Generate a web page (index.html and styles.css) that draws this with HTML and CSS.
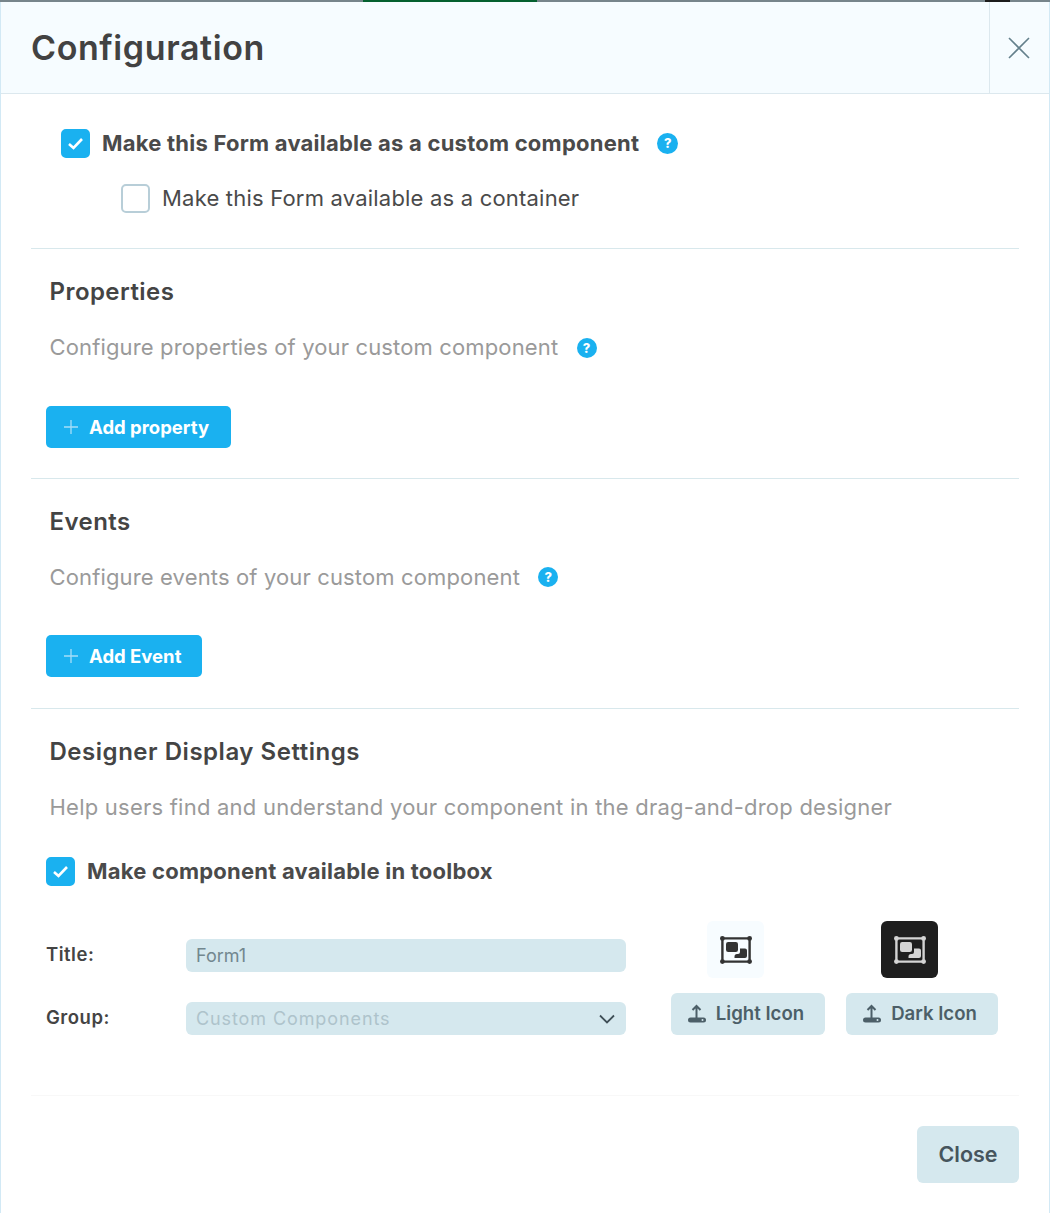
FILE: index.html
```html
<!DOCTYPE html>
<html lang="en">
<head>
    <meta charset="UTF-8">
    <title>Configuration</title>
    <link rel="stylesheet" href="styles.css">
</head>
<body>

<div class="topstrip">
    <span class="strip-grey strip-a"></span>
    <span class="strip-green"></span>
    <span class="strip-grey strip-b"></span>
    <span class="strip-black"></span>
    <span class="strip-grey strip-c"></span>
</div>

<div class="modal">
    <div class="modal-header">
        <h1>Configuration</h1>
        <button class="close-x" aria-label="Close">
            <svg width="22" height="22" viewBox="0 0 22 22"><path d="M1 1L21 21M21 1L1 21" stroke="#64808c" stroke-width="1.6" fill="none"/></svg>
        </button>
    </div>

    <div class="modal-body">
        <div class="section-first">
            <div class="check-row main-check">
                <span class="checkbox checked">
                    <svg width="17" height="13" viewBox="0 0 17 13"><path d="M2 7l4.5 4L15 2" stroke="#fff" stroke-width="2.6" fill="none"/></svg>
                </span>
                <span class="check-label strong">Make this Form available as a custom component</span>
                <span class="help help-main">?</span>
            </div>
            <div class="check-row sub-check">
                <span class="checkbox"></span>
                <span class="check-label">Make this Form available as a container</span>
            </div>
        </div>

        <div class="section">
            <h2>Properties</h2>
            <p class="desc">Configure properties of your custom component <span class="help">?</span></p>
            <button class="btn-add btn-property">
                <svg width="14" height="14" viewBox="0 0 14 14"><path d="M7 0V14M0 7H14" stroke="#a5def8" stroke-width="1.3" fill="none"/></svg>
                Add property
            </button>
        </div>

        <div class="section">
            <h2>Events</h2>
            <p class="desc">Configure events of your custom component <span class="help help-events">?</span></p>
            <button class="btn-add btn-event">
                <svg width="14" height="14" viewBox="0 0 14 14"><path d="M7 0V14M0 7H14" stroke="#a5def8" stroke-width="1.3" fill="none"/></svg>
                Add Event
            </button>
        </div>

        <div class="section section-designer">
            <h2>Designer Display Settings</h2>
            <p class="desc">Help users find and understand your component in the drag-and-drop designer</p>
            <div class="check-row toolbox-check">
                <span class="checkbox checked">
                    <svg width="17" height="13" viewBox="0 0 17 13"><path d="M2 7l4.5 4L15 2" stroke="#fff" stroke-width="2.6" fill="none"/></svg>
                </span>
                <span class="check-label strong">Make component available in toolbox</span>
            </div>

            <div class="toolbox">
                <div class="toolbox-fields">
                    <div class="field">
                        <label>Title:</label>
                        <div class="input">Form1</div>
                    </div>
                    <div class="field">
                        <label>Group:</label>
                        <div class="input select">
                            <span>Custom Components</span>
                            <svg width="16" height="10" viewBox="0 0 16 10"><path d="M1 1.5l7 7 7-7" stroke="#3f4f57" stroke-width="1.8" fill="none"/></svg>
                        </div>
                    </div>
                </div>

                <div class="icon-col icon-col-light">
                    <div class="preview preview-light">
                        <svg width="32" height="28" viewBox="0 0 32 28"><use href="#layout-icon"/></svg>
                    </div>
                    <button class="btn-icon">
                        <svg width="18" height="20" viewBox="0 0 18 20"><use href="#upload-icon"/></svg>
                        Light Icon
                    </button>
                </div>
                <div class="icon-col icon-col-dark">
                    <div class="preview preview-dark">
                        <svg width="32" height="28" viewBox="0 0 32 28"><use href="#layout-icon"/></svg>
                    </div>
                    <button class="btn-icon">
                        <svg width="18" height="20" viewBox="0 0 18 20"><use href="#upload-icon"/></svg>
                        Dark Icon
                    </button>
                </div>
            </div>
        </div>
    </div>

    <div class="modal-footer">
        <button class="btn-close">Close</button>
    </div>
</div>

<svg class="defs" width="0" height="0">
    <symbol id="layout-icon" viewBox="0 0 32 28">
        <path d="M2.4 2.4H29.6V25.6H2.4Z" fill="none" stroke="currentColor" stroke-width="2.4"/>
        <circle cx="2.4" cy="2.4" r="2.4" fill="currentColor"/>
        <circle cx="29.6" cy="2.4" r="2.4" fill="currentColor"/>
        <circle cx="2.4" cy="25.6" r="2.4" fill="currentColor"/>
        <circle cx="29.6" cy="25.6" r="2.4" fill="currentColor"/>
        <rect x="6" y="6" width="12" height="10" rx="2.2" fill="currentColor"/>
        <path d="M20 12.5H25Q27 12.5 27 14.5V20Q27 22 25 22H14.5V20.5Q14.5 18 17 18H18Q20 18 20 16Z" fill="currentColor"/>
    </symbol>
    <symbol id="upload-icon" viewBox="0 0 18 20">
        <path d="M8.5 16V3M4.5 7l4-4 4 4" fill="none" stroke="currentColor" stroke-width="2"/>
        <path d="M2.5 14.5H15.5Q18 14.5 18 17Q18 19.5 15.5 19.5H2.5Q0 19.5 0 17Q0 14.5 2.5 14.5Z" fill="currentColor"/>
        <circle cx="14.5" cy="17" r="1" fill="#d5e8ee"/>
    </symbol>
</svg>

</body>
</html>
```

FILE: styles.css
```css
* {
    box-sizing: border-box;
}
body {
    font-family: Inter, "Liberation Sans", sans-serif;
    background-color: #fff;
    color: #444;
    margin: 0;
    padding: 0;
    width: 1050px;
    height: 1213px;
    overflow: hidden;
}
button {
    font-family: inherit;
    border: none;
    padding: 0;
}
p, h1, h2 {
    margin: 0;
}
.defs {
    display: block;
}

.topstrip {
    display: flex;
    height: 2px;
}
.strip-grey {
    background-color: #77858b;
}
.strip-a { width: 363px; }
.strip-green { width: 174px; background-color: #04602f; }
.strip-b { width: 448px; }
.strip-black { width: 25px; background-color: #1c1c1c; }
.strip-c { width: 40px; }

.modal {
    height: 1211px;
    border-left: 1px solid #d2e9f5;
    border-right: 1px solid #d2e9f5;
    display: flex;
    flex-direction: column;
}
.modal-header {
    display: flex;
    justify-content: space-between;
    height: 92px;
    background-color: #f6fcff;
    border-bottom: 1px solid #dce8ee;
}
.modal-header h1 {
    font-size: 34px;
    font-weight: 600;
    letter-spacing: 0.6px;
    line-height: 91px;
    padding-left: 30px;
    color: #424242;
}
.close-x {
    width: 60px;
    padding-right: 2px;
    background: none;
    border-left: 1px solid #dce8ee;
    display: flex;
    align-items: center;
    justify-content: center;
}

.modal-body {
    flex: 1;
    padding: 0 30px;
}
.section-first {
    padding: 35px 0 35px 30px;
}
.check-row {
    display: flex;
    align-items: center;
}
.main-check {
    margin-bottom: 26px;
}
.sub-check {
    padding-left: 60px;
}
.checkbox {
    width: 29px;
    height: 29px;
    border-radius: 5px;
    border: 2px solid #b8ced8;
    background-color: #fff;
    display: flex;
    align-items: center;
    justify-content: center;
    flex-shrink: 0;
    margin-right: 12px;
}
.checkbox.checked {
    background-color: #1ab1f0;
    border-color: #1ab1f0;
}
.check-label {
    font-size: 22px;
    line-height: 29px;
    letter-spacing: 0.2px;
    color: #4a4a4a;
}
.check-label.strong {
    font-weight: 700;
    letter-spacing: 0.23px;
}
.help {
    display: inline-block;
    width: 20px;
    height: 20px;
    border-radius: 50%;
    background-color: #1ab1f0;
    color: #fff;
    font-size: 13px;
    font-weight: 800;
    line-height: 20px;
    letter-spacing: 0;
    text-align: center;
    margin-left: 12px;
    vertical-align: 2px;
}
.help-main {
    width: 21px;
    height: 21px;
    line-height: 21px;
    margin-left: 18px;
}
.help-events {
    vertical-align: 3px;
}

.section {
    border-top: 1px solid #d8e8ec;
    height: 230px;
    padding: 27px 19px 0 15px;
}
.section h2 {
    font-size: 24px;
    font-weight: 600;
    letter-spacing: 0.45px;
    line-height: 32px;
    padding-left: 3.5px;
    color: #444;
}
.desc {
    font-size: 22px;
    line-height: 30px;
    letter-spacing: 0.14px;
    color: #9a9a9a;
    margin-top: 24px;
    padding-left: 3.5px;
}
.btn-add {
    display: flex;
    align-items: center;
    height: 42px;
    margin-top: 44px;
    padding-left: 18px;
    border-radius: 5px;
    background-color: #1ab1f0;
    color: #fff;
    font-size: 18.5px;
    font-weight: 700;
}
.btn-add svg {
    margin-right: 11px;
}
.btn-property { width: 185px; }
.btn-event {
    width: 156px;
    margin-top: 43px;
    padding-bottom: 1px;
}

.section-designer {
    height: auto;
}
.section-designer h2 {
    letter-spacing: 0.53px;
}
.section-designer .desc {
    letter-spacing: 0.23px;
}
.toolbox-check {
    margin-top: 35px;
}
.toolbox {
    display: flex;
    margin-top: 35px;
}
.toolbox-fields {
    width: 625px;
    padding-top: 18px;
}
.field {
    display: flex;
    align-items: center;
    height: 33px;
    margin-bottom: 30px;
}
.field label {
    width: 140px;
    padding-bottom: 4px;
    font-size: 18.5px;
    font-weight: 600;
    letter-spacing: 0.5px;
    color: #444;
}
.input {
    width: 440px;
    height: 33px;
    border-radius: 6px;
    background-color: #d5e8ee;
    color: #72878f;
    font-size: 18px;
    line-height: 33px;
    padding: 0 11px 0 10px;
}
.select {
    display: flex;
    align-items: center;
    justify-content: space-between;
    color: #aec3cb;
    letter-spacing: 0.9px;
}
.icon-col {
    display: flex;
    flex-direction: column;
}
.icon-col-light { width: 154px; margin-right: 21px; }
.icon-col-dark { width: 152px; }
.preview {
    width: 57px;
    height: 57px;
    border-radius: 6px;
    display: flex;
    align-items: center;
    justify-content: center;
    margin-bottom: 15px;
}
.preview-light {
    background-color: #f7fcff;
    color: #333;
    margin-left: 36px;
}
.preview-dark {
    background-color: #1e1e1e;
    color: #d4d4d4;
    margin-left: 35px;
}
.btn-icon {
    display: flex;
    align-items: center;
    justify-content: center;
    width: 100%;
    height: 42px;
    padding: 0 4px 2px 0;
    border-radius: 6px;
    background-color: #d5e8ee;
    color: #4c5f68;
    font-size: 18.6px;
    font-weight: 600;
}
.btn-icon svg {
    margin-right: 10px;
}

.modal-footer {
    display: flex;
    justify-content: flex-end;
    margin: 0 30px;
    padding: 30px 0;
    border-top: 1px solid #f8f8f8;
}
.btn-close {
    width: 102px;
    height: 57px;
    padding-bottom: 2px;
    border-radius: 6px;
    background-color: #d5e8ee;
    color: #46555d;
    font-size: 21.5px;
    font-weight: 600;
}
```
